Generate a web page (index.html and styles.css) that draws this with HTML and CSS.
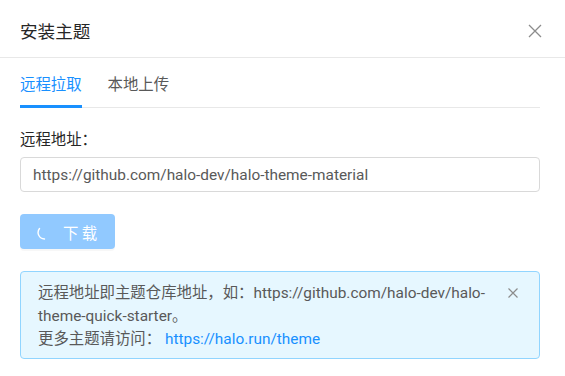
FILE: index.html
```html
<!DOCTYPE html>
<html>
<head>
    <meta charset="utf-8">
    <link rel="stylesheet" href="styles.css">
</head>
<body>
    <div class="modal">
        <div class="modal-header">
            <span class="modal-title">安装主题</span>
            <svg class="modal-close" width="14" height="14" viewBox="0 0 14 14">
                <path d="M1 1L13 13M13 1L1 13" stroke="#8c8c8c" stroke-width="1.3" fill="none"/>
            </svg>
        </div>
        <div class="modal-body">
            <div class="tabs">
                <div class="tab active">远程拉取</div>
                <div class="tab">本地上传</div>
            </div>
            <div class="field">
                <label class="field-label">远程地址：</label>
                <input class="field-input" type="text" value="https://github.com/halo-dev/halo-theme-material">
            </div>
            <button class="btn-download" type="button">
                <svg class="spin" width="14" height="14" viewBox="0 0 14 14">
                    <path d="M2.5 2.5A6.5 6.5 0 0 0 7.5 13" stroke="#fff" stroke-width="1.4" fill="none" stroke-linecap="round"/>
                </svg>
                <span>下 载</span>
            </button>
            <div class="alert">
                <div class="alert-message">
                    远程地址即主题仓库地址，如：https://github.com/halo-dev/halo-theme-quick-starter。<br>
                    更多主题请访问： <a href="#">https://halo.run/theme</a>
                </div>
                <svg class="alert-close" width="10" height="10" viewBox="0 0 10 10">
                    <path d="M0.5 0.5L9.5 9.5M9.5 0.5L0.5 9.5" stroke="#8c8c8c" stroke-width="1.2" fill="none"/>
                </svg>
            </div>
        </div>
    </div>
</body>
</html>
```

FILE: styles.css
```css
body{
    margin:0;
    background:#fff;
    font-family:Roboto,"Noto Sans CJK SC",sans-serif;
    font-size:15.4px;
    color:#595959;
}
.modal{
    width:565px;
}
.modal-header{
    display:flex;
    justify-content:space-between;
    align-items:center;
    height:58px;
    padding:4px 23px 0 20px;
    box-sizing:border-box;
    border-bottom:1px solid #e8e8e8;
}
.modal-title{
    font-family:"Noto Sans CJK SC",sans-serif;
    font-size:17.6px;
    color:#262626;
}
.modal-body{
    padding:0 25px 0 20px;
}
.tabs{
    display:flex;
    gap:26px;
    border-bottom:1px solid #e8e8e8;
}
.tab{
    font-family:"Noto Sans CJK SC",sans-serif;
    line-height:24px;
    padding:13px 0 10px;
    margin-bottom:-1px;
    border-bottom:3px solid transparent;
    color:#595959;
}
.tab.active{
    color:#1890ff;
    border-bottom-color:#1890ff;
}
.field{
    margin-top:18px;
}
.field-label{
    display:block;
    font-family:"Noto Sans CJK SC",sans-serif;
    line-height:24px;
    color:#262626;
}
.field-input{
    display:block;
    width:100%;
    box-sizing:border-box;
    height:35px;
    margin-top:7px;
    padding:0 12px;
    border:1px solid #d9d9d9;
    border-radius:4px;
    font-family:inherit;
    font-size:15.4px;
    color:#595959;
    outline:none;
}
.btn-download{
    display:flex;
    align-items:center;
    margin-top:22px;
    width:95px;
    height:35px;
    padding:0 0 0 17px;
    border:none;
    border-radius:4px;
    background:#91c9ff;
    color:#fff;
    font-family:"Noto Sans CJK SC",sans-serif;
    font-size:15.4px;
    box-shadow:0 2px 0 rgba(0,0,0,0.03);
}
.btn-download span{
    margin-left:12px;
}
.spin{
    margin-top:2px;
}
.alert{
    display:flex;
    align-items:flex-start;
    margin-top:22px;
    padding:10px 21px 7px 17px;
    background:#e6f7ff;
    border:1px solid #91d5ff;
    border-radius:4px;
}
.alert-message{
    flex:1;
    line-height:23px;
    margin-right:9px;
}
.alert-message a{
    color:#1890ff;
    text-decoration:none;
}
.alert-close{
    margin-top:6px;
}
```
